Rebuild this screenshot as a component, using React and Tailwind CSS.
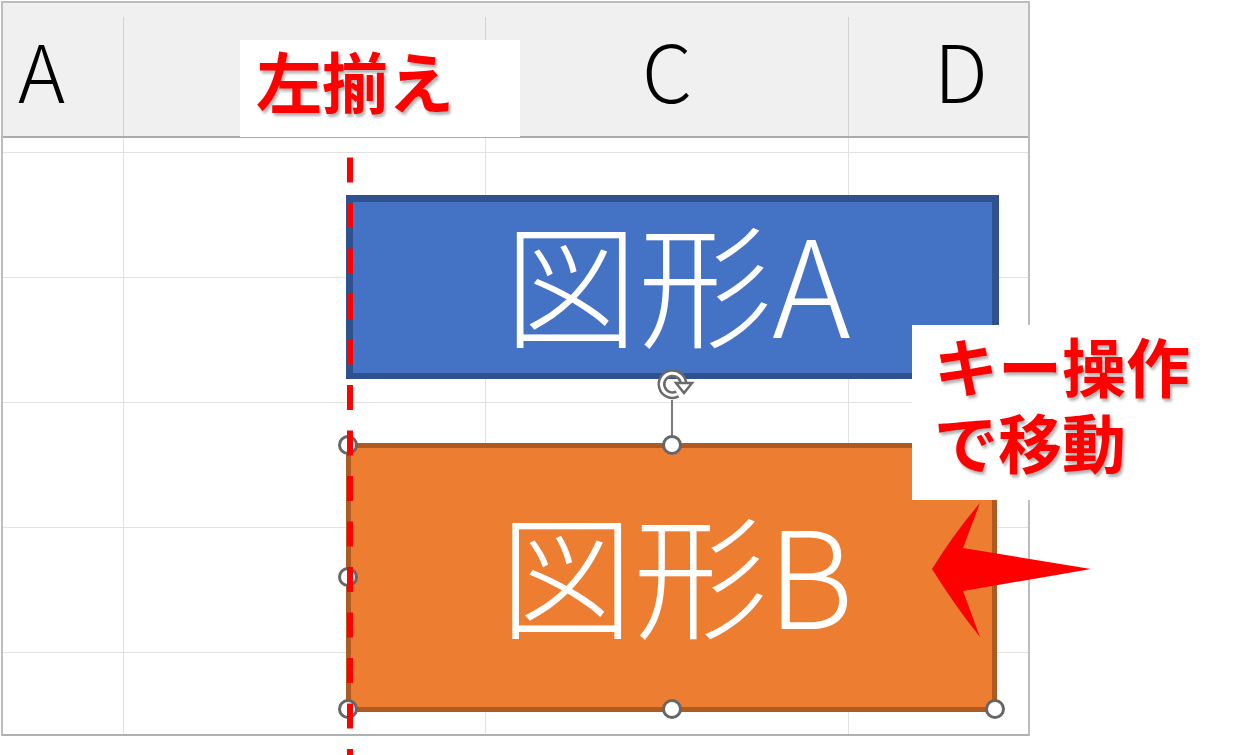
import React from 'react';

const cols = [
  { w: 'w-[121px]', label: 'A', cls: 'pl-[15px] justify-start' },
  { w: 'w-[362px]', label: '', cls: 'justify-center' },
  { w: 'w-[363px]', label: 'C', cls: 'justify-center' },
  { w: 'flex-1', label: 'D', cls: 'pl-[85px] justify-start' },
];

const rowHeights = ['h-[15px]', 'h-[125px]', 'h-[125px]', 'h-[125px]', 'h-[125px]', 'flex-1'];

const handles = [
  'left-[338px] top-[435px]',
  'left-[662px] top-[435px]',
  'left-[338px] top-[567px]',
  'left-[338px] top-[699px]',
  'left-[662px] top-[699px]',
  'left-[985px] top-[699px]',
];

const jp = { fontFamily: '"Noto Sans CJK JP", "Noto Sans", sans-serif' };

const Handle = ({ pos }) => (
  <div className={`absolute ${pos} w-[20px] h-[20px] rounded-full bg-white border-[3px] border-[#666666]`} />
);

const Sheet = () => (
  <div className="ml-[1px] mt-[1px] w-[1029px] h-[735px] flex flex-col border-2 border-[#bdbdbd] border-b-[#b0b0b0]">
    {/* column header */}
    <div className="h-[135px] shrink-0 bg-[#f0f0f0] border-b-2 border-[#ababab] flex flex-col">
      <div className="h-[14px] shrink-0" />
      <div className="flex-1 flex">
        {cols.map((c, i) => (
          <div
            key={i}
            className={`${c.w} ${c.cls} flex items-center border-r border-[#d2d2d2] last:border-r-0 text-[80px] leading-none font-light text-black pb-[18px]`}
            style={jp}
          >
            {c.label}
          </div>
        ))}
      </div>
    </div>
    {/* body rows */}
    <div className="flex-1 flex flex-col">
      {rowHeights.map((h, i) => (
        <div key={i} className={`${h} shrink-0 flex border-b border-[#e2e2e2] last:border-b-0`}>
          {cols.map((c, j) => (
            <div key={j} className={`${c.w} border-r border-[#e2e2e2] last:border-r-0`} />
          ))}
        </div>
      ))}
    </div>
  </div>
);

const RotateHandle = () => (
  <svg className="absolute left-[650px] top-[365px]" width="52" height="40" viewBox="0 0 52 40">
    <path d="M27.5 29 A11 11 0 1 1 33.5 19.5" fill="none" stroke="#6a6a6a" strokeWidth="8" />
    <path d="M27.5 29 A11 11 0 1 1 33.5 19.5" fill="none" stroke="#ffffff" strokeWidth="3" />
    <polygon points="26,18 42,18 34,28" fill="#ffffff" stroke="#6a6a6a" strokeWidth="2.5" />
  </svg>
);

export default function App() {
  return (
    <div className="relative w-[1240px] h-[755px] bg-white overflow-hidden">
      <Sheet />

      {/* shape A */}
      <div
        className="absolute left-[346px] top-[195px] w-[653px] h-[184px] bg-[#4472c4] border-[7px] border-[#2f528f] border-b-[6px] flex items-center justify-center pl-[10px] pb-[16px] text-white text-[134px] leading-none font-light"
        style={jp}
      >
        図形A
      </div>

      {/* rotation handle */}
      <div className="absolute left-[671px] top-[400px] w-[2px] h-[38px] bg-[#7a7a7a]" />
      <RotateHandle />

      {/* shape B */}
      <div
        className="absolute left-[346px] top-[443px] w-[651px] h-[269px] bg-[#ed7d31] border-[5px] border-[#ae5a21] flex items-center justify-center pl-[10px] pb-[14px] text-white text-[134px] leading-none font-light"
        style={jp}
      >
        図形B
      </div>

      {handles.map((p) => (
        <Handle key={p} pos={p} />
      ))}

      {/* alignment guide */}
      <svg className="absolute left-[344px] top-[0px]" width="12" height="755">
        <line x1="6" y1="112" x2="6" y2="755" stroke="#ff0000" strokeWidth="6" strokeDasharray="25 20.5" />
      </svg>

      {/* labels */}
      <div
        className="absolute left-[240px] top-[40px] w-[280px] h-[97px] bg-white flex items-center pl-[16px] pb-[20px] text-[#ff0000] text-[66px] leading-none font-bold [text-shadow:2px_3px_3px_rgba(0,0,0,0.3)]"
        style={jp}
      >
        左揃え
      </div>

      <div
        className="absolute left-[912px] top-[325px] w-[300px] h-[175px] bg-white pl-[22px] pt-[1px] text-[#ff0000] text-[64px] leading-[76px] font-bold [text-shadow:2px_3px_3px_rgba(0,0,0,0.3)]"
        style={jp}
      >
        <div>キー操作</div>
        <div>で移動</div>
      </div>

      {/* arrow */}
      <svg className="absolute left-[925px] top-[498px]" width="175" height="145" viewBox="925 498 175 145">
        <path d="M932 569 Q955 532 980 503 L963 548 L1091 569 L963 591 L980 637 Q955 606 932 569 Z" fill="#ff0000" />
      </svg>
    </div>
  );
}
